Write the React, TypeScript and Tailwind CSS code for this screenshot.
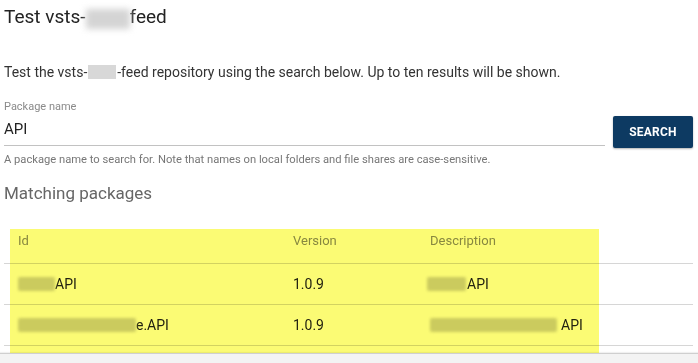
import React from "react";

function Blur({ w, h = 14, className = "" }: { w: number; h?: number; className?: string }) {
  return (
    <span
      className={"inline-block align-middle rounded-[2px] bg-[#cfcfcf] blur-[1.5px] " + className}
      style={{ width: w, height: h }}
    />
  );
}

export default function App() {
  return (
    <div className="relative w-[698px] h-[363px] overflow-hidden bg-white text-[#222] [font-family:Roboto,'Liberation_Sans',sans-serif]">
      <div className="pl-[4px] pt-[5px]">
        <h1 className="text-[19px] leading-[24px] text-[#222] flex items-center">
          <span>Test vsts-</span>
          <span className="inline-block w-[44px] h-[20px] bg-[#d4d4d4] blur-[3px] mt-[4px]" />
          <span>feed</span>
        </h1>
        <p className="mt-[34px] text-[14px] leading-[18px] text-[#333] flex items-center">
          <span>Test the vsts-</span>
          <span className="inline-block w-[28px] h-[14px] bg-[#d8d8d8] mx-[1px]" />
          <span>-feed repository using the search below. Up to ten results will be shown.</span>
        </p>

        <div className="mt-[19px] flex items-start gap-[8px]">
          <div className="w-[601px] border-b border-[#c2c2c2] pb-[6px]">
            <div className="text-[11px] leading-[14px] text-[#8a8a8a]">Package name</div>
            <div className="mt-[5px] text-[15px] leading-[20px] text-[#222]">API</div>
          </div>
          <button className="mt-[16px] w-[80px] h-[32px] rounded-[2px] bg-[#0d3a62] text-white text-[12px] font-bold tracking-[0.2px] shadow-[0_1px_2px_rgba(0,0,0,0.3)]">
            SEARCH
          </button>
        </div>
        <div className="mt-[5px] text-[11.2px] leading-[14px] text-[#777]">
          A package name to search for. Note that names on local folders and file shares are case-sensitive.
        </div>
        <h2 className="mt-[15px] text-[17px] leading-[22px] text-[#666]">Matching packages</h2>

        <div className="mt-[25px] w-[689px] text-[14px]">
          <div className="grid grid-cols-[289px_137px_1fr] h-[35px] border-b border-[#d6d6d6] pt-[4px] text-[13px] text-[#8a8a8a] leading-[16px]">
            <div className="pl-[14px]">Id</div>
            <div>Version</div>
            <div>Description</div>
          </div>
          <div className="grid grid-cols-[289px_137px_1fr] h-[41px] items-center border-b border-[#d6d6d6] text-[#222]">
            <div className="pl-[14px] flex items-center">
              <Blur w={37} />
              <span>API</span>
            </div>
            <div>1.0.9</div>
            <div className="flex items-center -ml-[3px]">
              <Blur w={39} />
              <span className="ml-[1px]">API</span>
            </div>
          </div>
          <div className="grid grid-cols-[289px_137px_1fr] h-[41px] items-center border-b border-[#d6d6d6] text-[#222]">
            <div className="pl-[14px] flex items-center">
              <Blur w={118} />
              <span>e.API</span>
            </div>
            <div>1.0.9</div>
            <div className="flex items-center">
              <Blur w={127} />
              <span className="ml-[4px]">API</span>
            </div>
          </div>
        </div>
      </div>

      <div className="absolute left-0 right-0 top-[353px] bottom-0 bg-[#f3f3f3] border-t border-[#cfcfcf] shadow-[0_-1px_1px_rgba(0,0,0,0.06)]" />
      <div className="absolute left-[10px] top-[229px] w-[589px] h-[124px] bg-[#fbfb74] mix-blend-multiply pointer-events-none" />
    </div>
  );
}
